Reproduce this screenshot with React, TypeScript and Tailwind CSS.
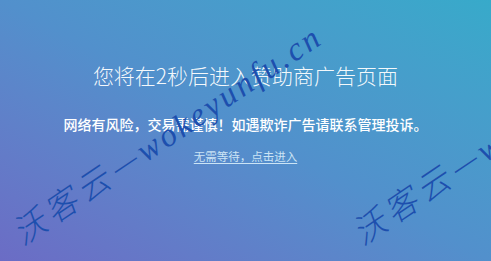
import React from 'react';

const Watermark = ({ left }: { left: number }) => (
  <div
    className="absolute text-[#1d4fae] whitespace-nowrap origin-left -rotate-[34deg] pointer-events-none"
    style={{ left, top: 210 }}
  >
    <span className="text-[33px] italic tracking-[5px]" style={{ fontFamily: '"Noto Sans CJK SC", serif', fontWeight: 300 }}>沃客云—</span>
    <span className="text-[33px] italic tracking-[3px]" style={{ fontFamily: '"Liberation Serif", serif' }}>wokeyunfu.cn</span>
  </div>
);

export default function App() {
  return (
    <div className="relative w-full h-[261px] overflow-hidden bg-linear-to-tr from-[#6b6cc5] via-[#5290cc] to-[#37aaca] font-['Noto_Sans_CJK_SC',sans-serif]">
      <div className="flex flex-col items-center pt-[61px]">
        <h1 className="text-[21px] font-light leading-[28px] text-white/95">您将在2秒后进入赞助商广告页面</h1>
        <p className="mt-[25px] text-[14px] font-medium leading-[20px] text-white">网络有风险，交易需谨慎！如遇欺诈广告请联系管理投诉。</p>
        <a className="mt-[14px] text-[11.5px] leading-[16px] text-[#cbe4f5] underline underline-offset-2">无需等待，点击进入</a>
      </div>
      <Watermark left={16} />
      <Watermark left={356} />
    </div>
  );
}
